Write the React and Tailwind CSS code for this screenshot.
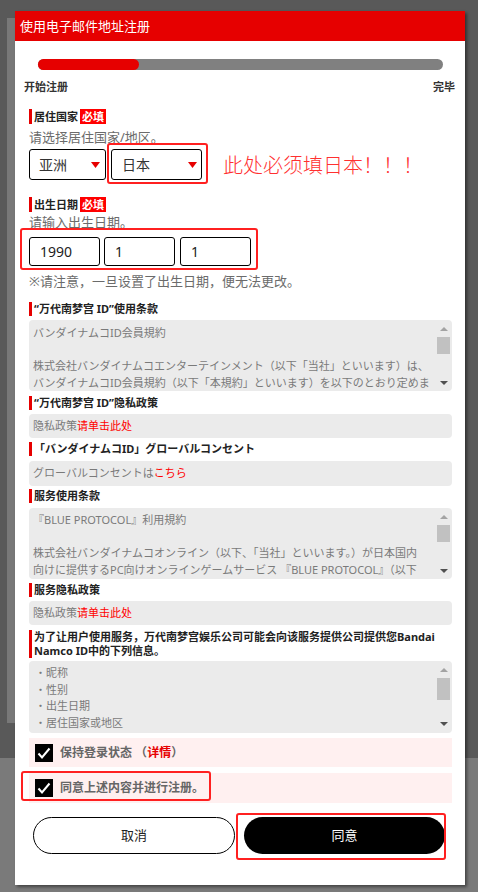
import React from "react";

const SC = "font-['Noto_Sans','Noto_Sans_CJK_SC',sans-serif]";
const JP = "font-['Noto_Sans','Noto_Sans_CJK_JP',sans-serif]";

function Label({ children, badge, className = "" }) {
  return (
    <div className={`flex items-stretch ${className}`}>
      <div className="w-[3px] bg-[#e60000]" />
      <div className="flex items-center pl-[2px] text-[11px] font-bold leading-[14px] text-[#222] whitespace-nowrap">
        {children}
      </div>
      {badge && (
        <span className="ml-[2px] bg-[#ff0000] px-[2px] text-[11px] font-bold leading-[15px] text-white">
          必填
        </span>
      )}
    </div>
  );
}

function Tri() {
  return (
    <svg width="9" height="6" viewBox="0 0 9 6">
      <polygon points="0,0 9,0 4.5,6" fill="#e60000" />
    </svg>
  );
}

function Scroll({ thumbH = 17, bottomPad = "pb-[6px]" }) {
  return (
    <div className={`mr-[1px] flex w-[15px] flex-col items-center pt-[7px] ${bottomPad}`}>
      <svg width="8" height="4" viewBox="0 0 8 4">
        <polygon points="0,4 8,4 4,0" fill="#a3a3a3" />
      </svg>
      <div className="mt-[6px] w-[13px] bg-[#c1c1c1]" style={{ height: thumbH }} />
      <div className="flex-1" />
      <svg width="8" height="4" viewBox="0 0 8 4">
        <polygon points="0,0 8,0 4,4" fill="#505050" />
      </svg>
    </div>
  );
}

function Check() {
  return (
    <div className="flex h-[18px] w-[18px] items-center justify-center bg-black">
      <svg width="18" height="18" viewBox="0 0 18 18">
        <polyline points="3.5,9.5 7,13.5 14.5,4.5" fill="none" stroke="white" strokeWidth="2" />
      </svg>
    </div>
  );
}

export default function App() {
  return (
    <div className={`relative h-[892px] w-full overflow-hidden bg-[#595959] ${SC}`}>
      <div className="absolute left-[7px] top-[18px] h-[705px] w-[8px] bg-[#787878]" />
      <div className="absolute bottom-0 left-0 right-0 top-[758px] bg-[#7a7a7a]" />

      <div className="relative ml-[15px] mt-[11px] w-[450px] bg-white pb-[31px] shadow-[2px_2px_3px_rgba(0,0,0,0.45)]">
        {/* header */}
        <div className="flex h-[30px] items-center bg-[#e60000] pl-[5px] text-[13px] leading-[18px] text-white">
          使用电子邮件地址注册
        </div>

        {/* progress */}
        <div className="ml-[23px] mt-[18px] h-[11px] w-[405px] rounded-full bg-[#808080]">
          <div className="h-[11px] w-[101px] rounded-full bg-[#e60000]" />
        </div>
        <div className="mt-[10px] flex justify-between px-[9px] pr-[10px] text-[11px] font-bold leading-[14px] text-[#333]">
          <span>开始注册</span>
          <span>完毕</span>
        </div>

        <div className="px-[14px] pr-[13px]">
          {/* country */}
          <Label badge className="mt-[15px]">居住国家</Label>
          <div className="mt-[4px] text-[13px] leading-[18px] text-[#6b6b6b]">请选择居住国家/地区。</div>
          <div className="mt-[3px] flex items-center">
            <div className="flex h-[31px] w-[77px] items-center justify-between rounded-[3px] border border-black pl-[9px] pr-[5px] text-[14px] text-[#333]">
              <span>亚洲</span>
              <Tri />
            </div>
            <div className="relative ml-[5px]">
              <div className="flex h-[31px] w-[91px] items-center justify-between rounded-[3px] border border-black pl-[10px] pr-[4px] text-[14px] text-[#333]">
                <span>日本</span>
                <Tri />
              </div>
              <div className="absolute bottom-[-4px] left-[-4px] right-[-6px] top-[-6px] rounded-[3px] border-2 border-[#ff2020]" />
            </div>
            <div className="ml-[21px] mt-[3px] text-[20px] font-light leading-[24px] text-[#ff3030] whitespace-nowrap">
              此处必须填日本！！！
            </div>
          </div>

          {/* birth */}
          <Label badge className="mt-[17px]">出生日期</Label>
          <div className="mt-[1px] text-[13px] leading-[18px] text-[#6b6b6b]">请输入出生日期。</div>
          <div className="relative mt-[6px] flex w-[222px]">
            <div className="flex h-[29px] w-[71px] items-center rounded-[3px] border border-black pl-[10px] text-[14px] text-[#222]">1990</div>
            <div className="ml-[4px] flex h-[29px] w-[71px] items-center rounded-[3px] border border-black pl-[10px] text-[14px] text-[#222]">1</div>
            <div className="ml-[5px] flex h-[29px] w-[71px] items-center rounded-[3px] border border-black pl-[10px] text-[14px] text-[#222]">1</div>
            <div className="absolute bottom-[-4px] left-[-9px] right-[-7px] top-[-9px] rounded-[3px] border-2 border-[#ff2020]" />
          </div>
          <div className="mt-[6px] text-[13px] leading-[18px] text-[#6b6b6b]">※请注意，一旦设置了出生日期，便无法更改。</div>

          {/* terms */}
          <Label className="mt-[12px]">“万代南梦宫 ID”使用条款</Label>
          <div className={`mt-[4px] flex h-[71px] overflow-hidden rounded-[4px] bg-[#ebebeb] ${JP}`}>
            <div className="flex-1 overflow-hidden pl-[4px] pt-[5px] text-[11px] leading-[16.5px] text-[#7a7a7a] whitespace-nowrap">
              <div>バンダイナムコID会員規約</div>
              <div>&nbsp;</div>
              <div>株式会社バンダイナムコエンターテインメント（以下「当社」といいます）は、</div>
              <div>バンダイナムコID会員規約（以下「本規約」といいます）を以下のとおり定めま</div>
            </div>
            <Scroll />
          </div>

          <Label className="mt-[5px]">“万代南梦宫 ID”隐私政策</Label>
          <div className="mt-[4px] flex h-[24px] items-center rounded-[4px] bg-[#ebebeb] pl-[4px] text-[11px] text-[#7a7a7a]">
            隐私政策<span className="text-[#ff0000]">请单击此处</span>
          </div>

          <Label className={`mt-[4px] ${JP}`}>「バンダイナムコID」グローバルコンセント</Label>
          <div className={`mt-[5px] flex h-[25px] items-center rounded-[4px] bg-[#ebebeb] pl-[4px] text-[11px] text-[#7a7a7a] ${JP}`}>
            グローバルコンセントは<span className="text-[#ff0000]">こちら</span>
          </div>

          <Label className="mt-[3px]">服务使用条款</Label>
          <div className={`mt-[5px] flex h-[71px] overflow-hidden rounded-[4px] bg-[#ebebeb] ${JP}`}>
            <div className="flex-1 overflow-hidden pl-[4px] pt-[4px] text-[11px] leading-[16.5px] text-[#7a7a7a] whitespace-nowrap">
              <div>『BLUE PROTOCOL』利用規約</div>
              <div>&nbsp;</div>
              <div>株式会社バンダイナムコオンライン（以下、「当社」といいます。）が日本国内</div>
              <div>向けに提供するPC向けオンラインゲームサービス 『BLUE PROTOCOL』（以下</div>
            </div>
            <Scroll />
          </div>

          <Label className="mt-[4px]">服务隐私政策</Label>
          <div className="mt-[4px] flex h-[24px] items-center rounded-[4px] bg-[#ebebeb] pl-[4px] text-[11px] text-[#7a7a7a]">
            隐私政策<span className="text-[#ff0000]">请单击此处</span>
          </div>

          <Label className="mt-[5px]">
            <span>
              为了让用户使用服务，万代南梦宫娱乐公司可能会向该服务提供公司提供您Bandai
              <br />
              Namco ID中的下列信息。
            </span>
          </Label>
          <div className="mt-[3px] flex h-[72px] overflow-hidden rounded-[4px] bg-[#ebebeb]">
            <div className="flex-1 overflow-hidden pl-[6px] pt-[4px] text-[11px] leading-[16.5px] text-[#7a7a7a] whitespace-nowrap">
              <div>・昵称</div>
              <div>・性别</div>
              <div>・出生日期</div>
              <div>・居住国家或地区</div>
            </div>
            <Scroll thumbH={22} bottomPad="pb-[7px]" />
          </div>

          {/* checkboxes */}
          <div className="mt-[5px] flex h-[29px] items-center bg-[#fff0f0] pl-[6px]">
            <Check />
            <div className="ml-[7px] text-[12px] font-bold text-[#666]">
              保持登录状态 （<span className="text-[#e60000]">详情</span>）
            </div>
          </div>
          <div className="relative mt-[6px] flex h-[30px] items-center bg-[#fff0f0] pl-[6px]">
            <Check />
            <div className="ml-[7px] text-[12px] font-bold text-[#666]">同意上述内容并进行注册。</div>
            <div className="absolute left-[-8px] top-[-2px] h-[30px] w-[190px] rounded-[3px] border-2 border-[#ff2020]" />
          </div>

          {/* buttons */}
          <div className="ml-[4px] mt-[14px] flex">
            <div className="flex h-[37px] w-[202px] items-center justify-center rounded-full border border-black text-[13px] text-[#222]">
              取消
            </div>
            <div className="relative ml-[9px]">
              <div className="flex h-[37px] w-[201px] items-center justify-center rounded-full bg-black text-[13px] text-white">
                同意
              </div>
              <div className="absolute bottom-[-6px] left-[-8px] right-[-1px] top-[-4px] rounded-[3px] border-2 border-[#ff2020]" />
            </div>
          </div>
        </div>
      </div>
    </div>
  );
}
